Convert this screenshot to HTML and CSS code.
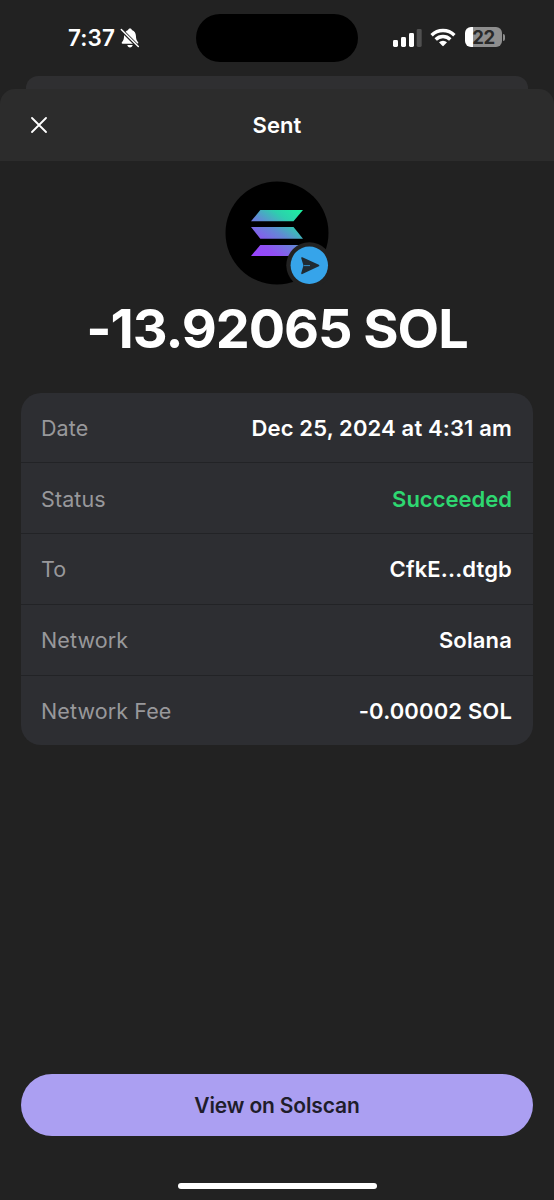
FILE: index.html
```html
<!DOCTYPE html>
<html lang="en">
<head>
<meta charset="utf-8">
<title>Sent</title>
<link rel="stylesheet" href="styles.css">
</head>
<body>
<div class="screen">
  <div class="status-bar">
    <div class="status-left">
      <span class="time">7:37</span>
      <svg class="bell" width="20" height="20" viewBox="0 0 20 20">
        <path fill="#fff" d="M10 .4c1.2 0 1.7.7 1.9 1.5 2.700.9 3.900 3.100 4 5.900.1 3.300.8 4.900 2.200 6.400.5.600.2 1.500-.7 1.500H2.600c-.9 0-1.200-.9-.7-1.500C3.300 12.700 4 11.100 4.100 7.800c.1-2.800 1.300-5 4-5.900C8.300 1.100 8.800.4 10 .4zM7.300 17h5.400c-.3 1.500-1.300 2.400-2.700 2.400S7.600 18.500 7.300 17z"/>
        <path stroke="#222" stroke-width="3.400" d="M.9 1.500 18.700 19.300"/>
        <path stroke="#fff" stroke-width="1.500" stroke-linecap="round" d="M1.300 1.500 18.300 18.500"/>
      </svg>
    </div>
    <div class="island"></div>
    <div class="status-right">
      <svg class="signal" width="29" height="18" viewBox="0 0 29 18">
        <g fill="#fff"><rect y="11" width="5" height="7" rx="1.400"/><rect x="8" y="8" width="5" height="10" rx="1.400"/><rect x="16" y="4" width="5" height="14" rx="1.400"/></g>
        <rect x="23.700" width="5" height="18" rx="1.400" fill="#505050"/>
      </svg>
      <svg class="wifi" width="26" height="19" viewBox="0 0 26 19">
        <g fill="none" stroke="#fff" stroke-width="3.400"><path d="M1.600 7.200a16.200 16.200 0 0 1 22.800 0"/><path d="M5.700 11.500a10.400 10.400 0 0 1 14.600 0"/></g>
        <path fill="#fff" d="M9 14.300a5.700 5.700 0 0 1 8 0l-3.300 3.500a1 1 0 0 1-1.400 0z"/>
      </svg>
      <div class="battery"><span>22</span></div><div class="battery-tip"></div>
    </div>
  </div>
  <div class="back-card"></div>
  <main class="sheet">
    <header class="header">
      <svg class="close" width="16" height="16" viewBox="0 0 16 16"><path stroke="#fff" stroke-width="1.800" stroke-linecap="round" d="M1 1 15 15M15 1 1 15"/></svg>
      <h1 class="title">Sent</h1>
    </header>
    <svg class="token" width="104" height="104" viewBox="0 0 104 104">
      <defs><linearGradient id="sol" gradientUnits="userSpaceOnUse" x1="34" y1="77" x2="70" y2="25"><stop offset="0" stop-color="#9945ff"/><stop offset=".2" stop-color="#9150f4"/><stop offset=".5" stop-color="#6289d5"/><stop offset=".75" stop-color="#2dcfae"/><stop offset="1" stop-color="#1df0a0"/></linearGradient></defs>
      <circle cx="52" cy="52" r="51.500" fill="#000"/>
      <g fill="url(#sol)"><path d="M35.300 29H78L68.500 40.300H26z"/><path d="M26 46H68.500L78 57.700H35.300z"/><path d="M35.300 64H78L68.500 75H26z"/></g>
      <circle cx="84.300" cy="84.300" r="23" fill="#222"/>
      <circle cx="84.300" cy="84.300" r="18.700" fill="#36a4ea"/>
      <path d="M77 77 93.500 84.600 77 92.300 79.300 84.600z" fill="#202b33" stroke="#202b33" stroke-width="1.600" stroke-linejoin="round"/>
      <path d="M79 84.600h6" stroke="#36a4ea" stroke-width=".8"/>
    </svg>
    <div class="amount">-13.92065 SOL</div>
    <dl class="details">
      <div class="row"><dt>Date</dt><dd>Dec 25, 2024 at 4:31 am</dd></div>
      <div class="row"><dt>Status</dt><dd class="success">Succeeded</dd></div>
      <div class="row"><dt>To</dt><dd>CfkE...dtgb</dd></div>
      <div class="row"><dt>Network</dt><dd>Solana</dd></div>
      <div class="row"><dt>Network Fee</dt><dd>-0.00002 SOL</dd></div>
    </dl>
    <button class="action">View on Solscan</button>
    <div class="home-bar"></div>
  </main>
</div>
</body>
</html>
```
FILE: styles.css
```css
* { box-sizing: border-box; }
body { margin: 0; background: #222; font-family: Inter, "Liberation Sans", sans-serif; color: #fff; }
svg { display: block; flex: none; }
.screen { width: 554px; height: 1200px; display: flex; flex-direction: column; background: #222; overflow: hidden; }
.status-bar { height: 76px; flex: none; display: grid; grid-template-columns: 196px 162px 196px; align-items: center; }
.status-left { display: flex; align-items: center; padding-left: 68px; gap: 4px; }
.time { width: 48px; font-size: 22.5px; font-weight: 600; letter-spacing: 0.1px; line-height: 28px; white-space: nowrap; }
.island { height: 48px; border-radius: 24px; background: #000; }
.status-right { display: flex; align-items: center; padding-left: 35px; }
.signal { margin-top: -1px; }
.wifi { margin: -2px 0 0 8px; }
.battery { width: 37px; height: 20px; margin: -2px 0 0 9px; border-radius: 6px; background: linear-gradient(90deg, #fff 8px, #8e8e8e 8px); color: #292929; font-size: 18.5px; font-weight: 700; letter-spacing: -0.5px; line-height: 20px; text-align: center; }
.battery-tip { width: 2px; height: 7px; margin: -2px 0 0 1px; border-radius: 0 2px 2px 0; background: #8e8e8e; }
.back-card { height: 13px; flex: none; margin: 0 26px; border-radius: 12px 12px 0 0; background: #2f2f31; }
.sheet { flex: 1; display: flex; flex-direction: column; align-items: center; }
.header { width: 100%; height: 72px; display: grid; grid-template-columns: 48px 1fr 48px; align-items: center; border-radius: 15px 15px 0 0; background: #2c2c2c; }
.close { margin-left: 31px; }
.title { margin: 0; text-align: center; font-size: 22px; font-weight: 600; letter-spacing: 0.1px; }
.token { margin-top: 20px; }
.amount { margin-top: 11px; height: 66px; line-height: 66px; font-size: 54px; font-weight: 700; letter-spacing: -1.05px; white-space: nowrap; }
.details { width: 512px; height: 352px; margin: 31px 0 0; border-radius: 20px; background: #2d2e32; overflow: hidden; display: flex; flex-direction: column; }
.row { flex: none; height: 71px; display: flex; align-items: center; justify-content: space-between; padding: 0 21px 0 20px; border-bottom: 1px solid #222326; font-size: 22px; }
.row:first-child { height: 70px; }
.row:nth-child(2) { padding-top: 1px; }
.row:last-child { height: 69px; border-bottom: 0; }
dt { color: #98989b; font-size: 21.5px; letter-spacing: 0.1px; }
dd { margin: 0; font-weight: 600; letter-spacing: 0.15px; }
.success { color: #2ed771; letter-spacing: 0; }
.action { width: 512px; height: 62px; margin: auto 0 0; padding: 0; border: 0; border-radius: 31px; background: #ab9ff2; color: #1f1d2b; font: 600 21px Inter, "Liberation Sans", sans-serif; letter-spacing: -0.15px; }
.home-bar { width: 199px; height: 6px; margin: 47px 0 11px; border-radius: 3px; background: #fff; }
```
